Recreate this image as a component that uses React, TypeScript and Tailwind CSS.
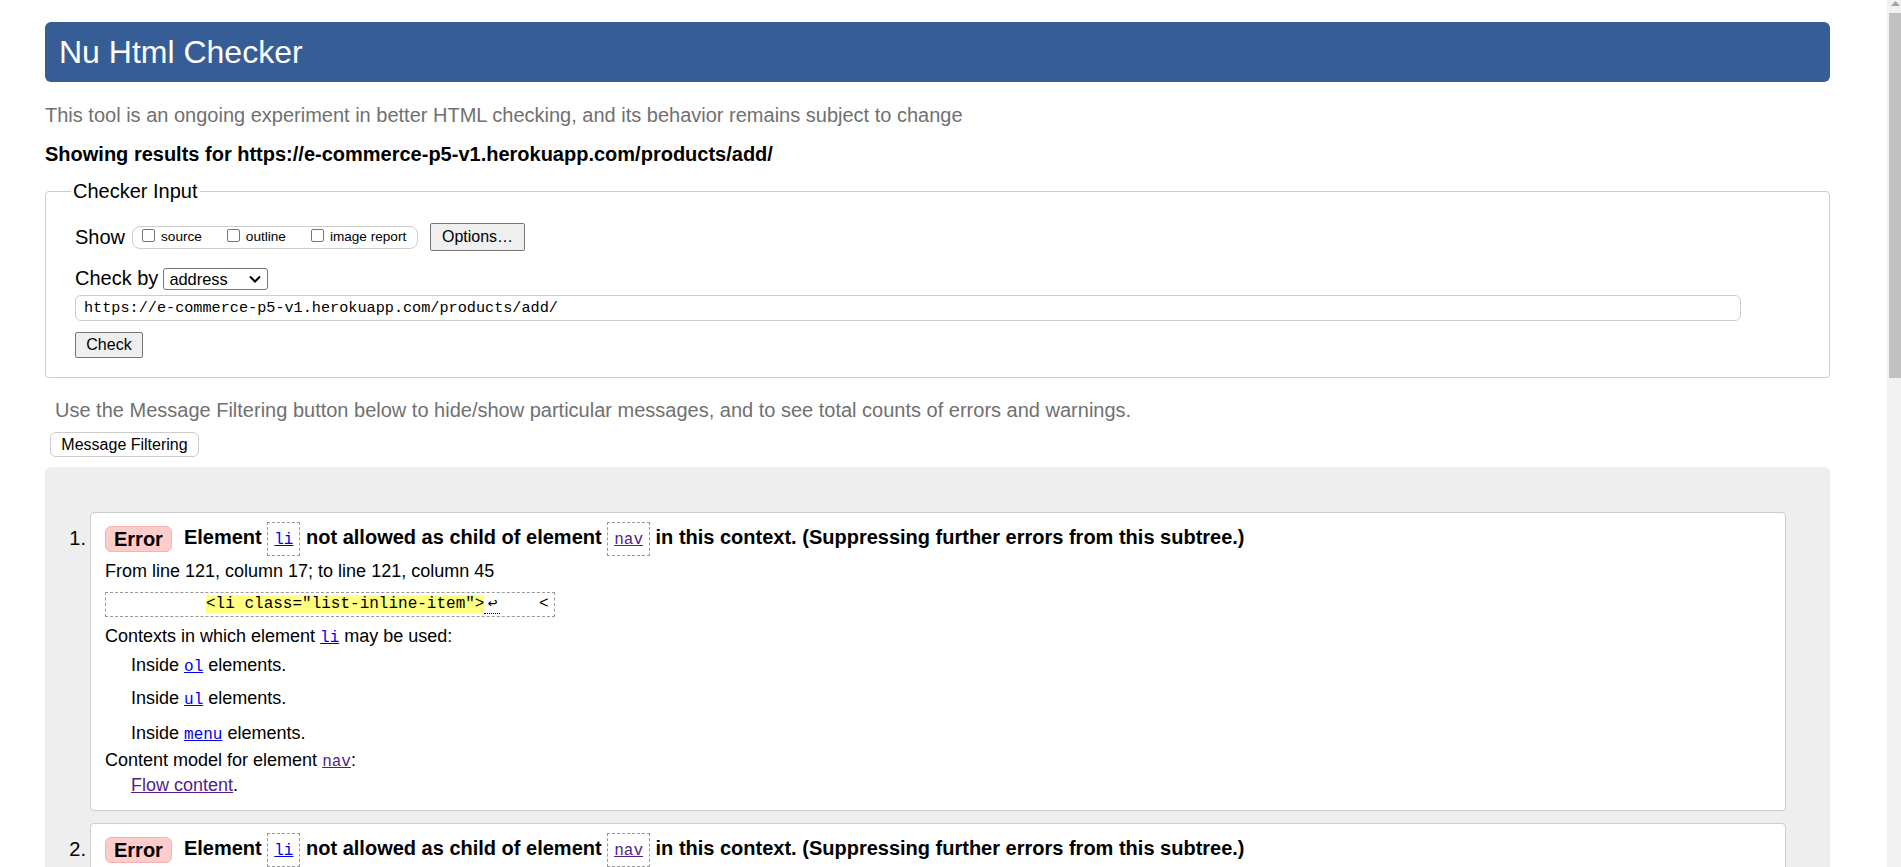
import React from 'react';

function CodeLink({ children, visited }: { children: React.ReactNode; visited?: boolean }) {
  return (
    <a
      href="#"
      className={
        visited
          ? "font-['Liberation_Mono',monospace] font-normal text-[16px] text-[#551a8b] underline"
          : "font-['Liberation_Mono',monospace] font-normal text-[16px] text-[#0000ee] underline"
      }
    >
      {children}
    </a>
  );
}

function Boxed({ children, visited }: { children: React.ReactNode; visited?: boolean }) {
  return (
    <span className="inline-block align-middle border border-dashed border-[#999] px-[6px] py-[4px] leading-[21px]">
      <CodeLink visited={visited}>{children}</CodeLink>
    </span>
  );
}

function Checkbox({ label }: { label: string }) {
  return (
    <span className="flex items-center gap-[6px]">
      <span className="mb-[4px] h-[13px] w-[13px] rounded-[2px] border border-[#767676] bg-white" />
      <span className="text-[13.6px] leading-[16px]">{label}</span>
    </span>
  );
}

function ErrorCard({ n, full }: { n: number; full?: boolean }) {
  return (
    <li className="flex">
      <div className="w-[45px] pr-[4px] pt-[14px] text-right text-[20px] leading-[24px]">{n}.</div>
      <div className="flex-1 rounded-[4px] border border-[#ccc] bg-white pl-[14px] pt-[10px] pb-[13px]">
        <div className="flex h-[31px] items-center text-[20px] font-bold leading-[24px]">
          <span className="flex h-[26px] items-center rounded-[6px] border border-[#f3b3b3] bg-[#ffcccc] px-[8px]">
            Error
          </span>
          <span className="ml-[12px] whitespace-pre">
            Element <Boxed>li</Boxed> not allowed as child of element <Boxed visited>nav</Boxed> in this
            context. (Suppressing further errors from this subtree.)
          </span>
        </div>
        {full && (
          <div className="text-[18px] leading-[24px]">
            <p className="mt-[5px]">From line 121, column 17; to line 121, column 45</p>
            <div className="mt-[9px] inline-block border border-dashed border-[#999] pl-[4px] pr-[6px] font-['Liberation_Mono','DejaVu_Sans_Mono',monospace] text-[16px] leading-[23px] whitespace-pre">
              {'          '}
              <mark className="bg-[#ffff80] text-black">{'<li class="list-inline-item">'}</mark>
              <span className="inline-block w-[16px] border-b border-dotted border-black text-center leading-[18px]">↩</span>
              {'    <'}
            </div>
            <p className="mt-[7px]">
              Contexts in which element <CodeLink>li</CodeLink> may be used:
            </p>
            <p className="mt-[3px] pl-[26px]">
              Inside <CodeLink>ol</CodeLink> elements.
            </p>
            <p className="mt-[7px] pl-[26px]">
              Inside <CodeLink>ul</CodeLink> elements.
            </p>
            <p className="mt-[9px] pl-[26px]">
              Inside <CodeLink>menu</CodeLink> elements.
            </p>
            <p className="mt-[1px]">
              Content model for element <CodeLink visited>nav</CodeLink>:
            </p>
            <p className="-mt-[1px] pl-[26px]">
              <a href="#" className="text-[#551a8b] underline">
                Flow content
              </a>
              .
            </p>
          </div>
        )}
      </div>
    </li>
  );
}

export default function App() {
  return (
    <div className="flex h-[867px] w-full overflow-hidden bg-white font-['Liberation_Sans',Arial,sans-serif] text-black">
      <div className="min-w-0 flex-1 pl-[45px] pr-[57px]">
        <header className="mt-[22px] flex h-[60px] items-center rounded-[6px] bg-[#365d95] pl-[14px] text-[32px] leading-[32px] text-white">
          Nu Html Checker
        </header>

        <p className="mt-[21px] text-[20px] leading-[24px] text-[#707070]">
          This tool is an ongoing experiment in better HTML checking, and its behavior remains subject to change
        </p>
        <p className="mt-[15px] text-[20px] font-bold leading-[24px]">
          Showing results for https://e-commerce-p5-v1.herokuapp.com/products/add/
        </p>

        <fieldset className="mt-[13px] rounded-[4px] border border-[#ccc] pl-[29px] pb-[19px] text-[20px] leading-[24px]">
          <legend className="-ml-[4px] px-[2px]">Checker Input</legend>

          <div className="mt-[20px] flex h-[28px] items-center">
            <span>Show</span>
            <div className="ml-[7px] flex h-[23px] w-[286px] items-center gap-[25px] rounded-[8px] border border-[#ccc] pl-[9px]">
              <Checkbox label="source" />
              <Checkbox label="outline" />
              <Checkbox label="image report" />
            </div>
            <button className="ml-[12px] h-[28px] w-[95px] rounded-[2px] border border-[#767676] bg-[#efefef] text-[16px]">
              Options…
            </button>
          </div>

          <div className="mt-[15px] flex h-[24px] items-center">
            <span>Check by</span>
            <div className="ml-[5px] mt-[2px] flex h-[22px] w-[105px] items-center justify-between rounded-[3px] border border-[#767676] pl-[5px] pr-[6px] text-[16.4px] leading-[20px]">
              <span>address</span>
              <svg width="12" height="8" viewBox="0 0 12 8">
                <polyline points="1,1.5 6,6.5 11,1.5" fill="none" stroke="#000" strokeWidth="2" />
              </svg>
            </div>
          </div>

          <div className="mt-[5px] flex h-[26px] w-[1666px] items-center rounded-[6px] border border-[#ccc] pl-[8px] font-['Liberation_Mono',monospace] text-[15.2px]">
            https://e-commerce-p5-v1.herokuapp.com/products/add/
          </div>

          <button className="mt-[11px] block h-[26px] w-[68px] rounded-[2px] border border-[#767676] bg-[#efefef] text-[16px]">
            Check
          </button>
        </fieldset>

        <p className="mt-[20px] pl-[10px] text-[20px] leading-[24px] text-[#707070]">
          Use the Message Filtering button below to hide/show particular messages, and to see total counts of errors
          and warnings.
        </p>
        <button className="ml-[5px] mt-[10px] block h-[25px] w-[149px] rounded-[6px] border border-[#ccc] bg-white text-[16px]">
          Message Filtering
        </button>

        <div className="mt-[10px] h-[500px] rounded-t-[6px] bg-[#eeeeee] pt-[45px] pr-[44px]">
          <ol className="flex flex-col gap-[12px]">
            <ErrorCard n={1} full />
            <ErrorCard n={2} />
          </ol>
        </div>
      </div>

      <div className="flex w-[14px] flex-col bg-[#f1f1f1]">
        <div className="flex h-[13px] justify-end pr-[1px] pt-[1px]">
          <svg width="9" height="6" viewBox="0 0 9 6">
            <polygon points="4.5,0 9,5 0,5" fill="#a3a3a3" />
          </svg>
        </div>
        <div className="ml-[2px] h-[365px] bg-[#c1c1c1]" />
      </div>
    </div>
  );
}
